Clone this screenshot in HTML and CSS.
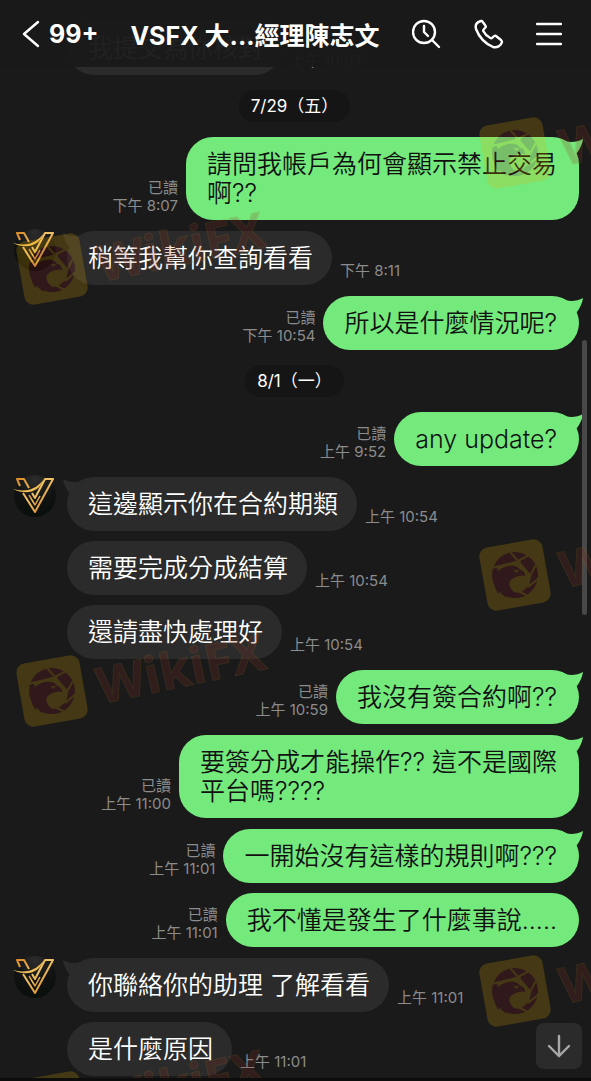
FILE: index.html
```html
<!DOCTYPE html>
<html lang="zh-Hant">
<head>
    <meta charset="UTF-8">
    <meta name="viewport" content="width=device-width, initial-scale=1.0">
    <title>VSFX</title>
    <link rel="stylesheet" href="styles.css">
</head>
<body>
    <!-- shared shapes -->
    <svg class="defs" width="0" height="0" aria-hidden="true">
        <defs>
            <linearGradient id="gold" x1="0" y1="0" x2="1" y2="1">
                <stop offset="0" stop-color="#d98a2b"/>
                <stop offset="0.45" stop-color="#f0c468"/>
                <stop offset="1" stop-color="#d07a20"/>
            </linearGradient>
            <radialGradient id="disc" cx="0.5" cy="0.1" r="0.9">
                <stop offset="0" stop-color="#2c2c2c"/>
                <stop offset="0.6" stop-color="#0f1210"/>
                <stop offset="1" stop-color="#0a0f0c"/>
            </radialGradient>
        </defs>
        <symbol id="logo" viewBox="0 0 44 44">
            <circle cx="22" cy="22" r="21" fill="url(#disc)"/>
            <g fill="none" stroke="url(#gold)" stroke-width="2" stroke-linejoin="round">
                <path d="M7 12L4 5h7l5 9M10 19l12 19L40 5h-8L22 24l-3-5"/>
                <path d="M16 21l6 10 5-9" stroke-width="1.500"/>
            </g>
            <path d="M0 15c10 3 22 2 30-9-3 11-16 16-30 9z" fill="#eebb55"/>
        </symbol>
        <symbol id="mark" viewBox="0 0 270 110">
            <g transform="translate(42 65) rotate(-10)">
                <rect x="-32" y="-32" width="64" height="64" rx="9" fill="#eeb000"/>
                <circle r="23" fill="#8c1420"/>
                <path d="M-17-11L5-13 16 3 12 13 3 18-10 17z" fill="#eeb000"/>
                <path d="M-22-11L8-13M-1-24L15 3M17-17L4-13M23 7L11 14M8 22L1 17M15 3l7-9" fill="none" stroke="#eeb000" stroke-width="2"/>
                <path d="M-23 2C-20-5-14-10-5-10c7 0 10 3 11 6 3 1 4 3 4 7-3-2-6-1-9-1-6 1-9 4-8 9 1 4 4 7 8 9-5 1-10-1-13-5l1 6c-4-2-6-5-7-9l-1 4c-3-4-3-9-3-12z" fill="#8c1420"/>
                <path d="M-1-5l6 1-3 2z" fill="#eeb000"/>
            </g>
            <text class="mark-text" x="91" y="78" transform="rotate(-12 91 78)">WikiFX</text>
        </symbol>
    </svg>

    <div class="app">
        <header class="topbar">
            <button class="icon-btn back" aria-label="返回">
                <svg width="18" height="28" viewBox="0 0 18 28"><path d="M16 2L2 14l14 12"/></svg>
                <span>99+</span>
            </button>
            <h1 class="title">VSFX 大...經理陳志文</h1>
            <button class="icon-btn" aria-label="搜尋">
                <svg width="30" height="30" viewBox="0 0 30 30"><circle cx="12" cy="13" r="11"/><path d="M20 21l7 7M12 7v6l4 4"/></svg>
            </button>
            <button class="icon-btn" aria-label="通話">
                <svg width="30" height="30" viewBox="0 0 30 30"><path d="M7 2C3 3 1 6 2 10c3 8 8 14 17 18 4 1 8-1 9-5 0-1 0-1-1-2l-5-4c-1-1-2 0-3 1l-1 1c-1 1-2 0-3-1-2-1-4-3-5-5-1-1-1-2 0-3l1-1c1-1 1-2 0-3L8 2C8 2 7 2 7 2z"/></svg>
            </button>
            <button class="icon-btn" aria-label="選單">
                <svg width="26" height="26" viewBox="0 0 26 26"><path d="M1 3h24M1 13h24M1 23h24"/></svg>
            </button>
        </header>

        <main class="chat">
            <div class="row in">
                <p class="bubble">我提交為你核對</p>
                <div class="meta"><time>上午 10:07</time></div>
            </div>

            <div class="date">7/29（五）</div>

            <div class="row out">
                <div class="meta"><span>已讀</span><time>下午 8:07</time></div>
                <p class="bubble tail">請問我帳戶為何會顯示禁止交易<br>啊??</p>
            </div>
            <div class="row in first">
                <svg class="avatar"><use href="#logo"/></svg>
                <p class="bubble tail">稍等我幫你查詢看看</p>
                <div class="meta"><time>下午 8:11</time></div>
            </div>
            <div class="row out first">
                <div class="meta"><span>已讀</span><time>下午 10:54</time></div>
                <p class="bubble tail">所以是什麼情況呢?</p>
            </div>

            <div class="date">8/1（一）</div>

            <div class="row out">
                <div class="meta"><span>已讀</span><time>上午 9:52</time></div>
                <p class="bubble tail">any update?</p>
            </div>
            <div class="row in first">
                <svg class="avatar"><use href="#logo"/></svg>
                <p class="bubble tail">這邊顯示你在合約期類</p>
                <div class="meta"><time>上午 10:54</time></div>
            </div>
            <div class="row in">
                <p class="bubble">需要完成分成結算</p>
                <div class="meta"><time>上午 10:54</time></div>
            </div>
            <div class="row in">
                <p class="bubble">還請盡快處理好</p>
                <div class="meta"><time>上午 10:54</time></div>
            </div>
            <div class="row out first">
                <div class="meta"><span>已讀</span><time>上午 10:59</time></div>
                <p class="bubble tail">我沒有簽合約啊??</p>
            </div>
            <div class="row out first">
                <div class="meta"><span>已讀</span><time>上午 11:00</time></div>
                <p class="bubble tail">要簽分成才能操作?? 這不是國際<br>平台嗎????</p>
            </div>
            <div class="row out first">
                <div class="meta"><span>已讀</span><time>上午 11:01</time></div>
                <p class="bubble tail">一開始沒有這樣的規則啊???</p>
            </div>
            <div class="row out">
                <div class="meta"><span>已讀</span><time>上午 11:01</time></div>
                <p class="bubble">我不懂是發生了什麼事說.....</p>
            </div>
            <div class="row in first">
                <svg class="avatar"><use href="#logo"/></svg>
                <p class="bubble tail">你聯絡你的助理 了解看看</p>
                <div class="meta"><time>上午 11:01</time></div>
            </div>
            <div class="row in">
                <p class="bubble">是什麼原因</p>
                <div class="meta"><time>上午 11:01</time></div>
            </div>
        </main>

        <div class="scrollbar"></div>
        <button class="to-bottom" aria-label="捲到最新訊息">
            <svg width="24" height="24" viewBox="0 0 24 24"><path d="M12 2v20M2 12l10 10 10-10"/></svg>
        </button>

        <div class="marks" aria-hidden="true">
            <svg class="mark right m1"><use href="#mark"/></svg>
            <svg class="mark left m2"><use href="#mark"/></svg>
            <svg class="mark right m3"><use href="#mark"/></svg>
            <svg class="mark left m4"><use href="#mark"/></svg>
            <svg class="mark right m5"><use href="#mark"/></svg>
            <svg class="mark left m6"><use href="#mark"/></svg>
        </div>
    </div>
</body>
</html>
```
FILE: styles.css
```css
* {
    box-sizing: border-box;
}
body {
    margin: 0;
    background-color: #1a1a1a;
    color: white;
    font-family: Inter, "Noto Sans CJK TC", sans-serif;
}
.defs {
    position: absolute;
}
.app {
    position: relative;
    height: 100vh;
    overflow: hidden;
    border-bottom: 3px solid #0d0d0d;
}

/* top bar */
.topbar {
    position: absolute;
    top: 0;
    left: 0;
    right: 0;
    z-index: 2;
    display: flex;
    align-items: center;
    height: 67px;
    padding: 0 29px 0 22px;
    gap: 32px;
    background-color: rgba(26, 26, 26, 0.97);
}
.title {
    flex: 1;
    margin: 0;
    font-size: 25px;
    font-weight: 700;
    white-space: nowrap;
}
.icon-btn {
    display: flex;
    align-items: center;
    padding: 0;
    border: none;
    background: none;
    color: white;
    cursor: pointer;
}
.icon-btn svg {
    fill: none;
    stroke: currentColor;
    stroke-width: 2.4;
    stroke-linecap: round;
    stroke-linejoin: round;
}
.back {
    gap: 9px;
    font: 700 25px Inter, sans-serif;
}

/* messages */
.chat {
    padding: 11px 12px 0 0;
}
.row {
    display: flex;
    align-items: flex-end;
    gap: 8px;
    margin-top: 10px;
}
.row.first {
    margin-top: 11px;
}
.in {
    position: relative;
    padding-left: 67px;
}
.out {
    justify-content: flex-end;
}
.bubble {
    position: relative;
    margin: 0;
    padding: 13px 19px 12px 21px;
    border-radius: 27px;
    font-size: 25px;
    font-weight: 350;
    line-height: 29px;
    white-space: nowrap;
}
.in .bubble {
    background-color: #2b2b2b;
}
.out .bubble {
    padding-right: 22px;
    background-color: #74ea7c;
    color: #111;
}
.tail::after {
    content: "";
    position: absolute;
    top: 0;
    right: -4px;
    width: 24px;
    height: 24px;
    background-color: inherit;
    clip-path: path("M2 2Q8 5 12 5Q19 5 24 2Q23 9 18 16L8 14Z");
}
.in .tail::after {
    right: auto;
    left: -4px;
    transform: scaleX(-1);
}
.avatar {
    position: absolute;
    left: 13px;
    top: -3px;
    width: 44px;
    height: 44px;
}
.meta {
    display: flex;
    flex-direction: column;
    padding-bottom: 5px;
    color: #8c8c8c;
    font-size: 15px;
    line-height: 18px;
    text-align: right;
}
.date {
    width: fit-content;
    margin: 15px auto;
    padding: 0 12px;
    position: relative;
    left: 5px;
    border-radius: 16px;
    background-color: #151515;
    font-size: 17px;
    line-height: 32px;
}

/* floating controls */
.scrollbar {
    position: absolute;
    top: 340px;
    right: 4px;
    width: 5px;
    height: 275px;
    border-radius: 3px;
    background-color: #484848;
}
.to-bottom {
    position: absolute;
    right: 9px;
    bottom: 9px;
    display: flex;
    align-items: center;
    justify-content: center;
    width: 46px;
    height: 46px;
    padding: 0;
    border: none;
    border-radius: 8px;
    background-color: #2b2b2b;
    cursor: pointer;
}
.to-bottom svg {
    fill: none;
    stroke: #a8a8a8;
    stroke-width: 2.4;
    stroke-linecap: round;
}

/* watermark */
.mark {
    position: absolute;
    width: 270px;
    height: 110px;
    opacity: 0.2;
    pointer-events: none;
}
.mark-text {
    font-family: "Open Sans", sans-serif;
    font-size: 50px;
    font-weight: 700;
    fill: #8c2c20;
    stroke: #a86a20;
    stroke-width: 1;
}
.left {
    left: 10px;
}
.right {
    left: 473px;
}
.m1 {
    top: 88px;
}
.m2 {
    top: 204px;
}
.m3 {
    top: 510px;
}
.m4 {
    top: 626px;
}
.m5 {
    top: 926px;
}
.m6 {
    top: 1042px;
}
```
